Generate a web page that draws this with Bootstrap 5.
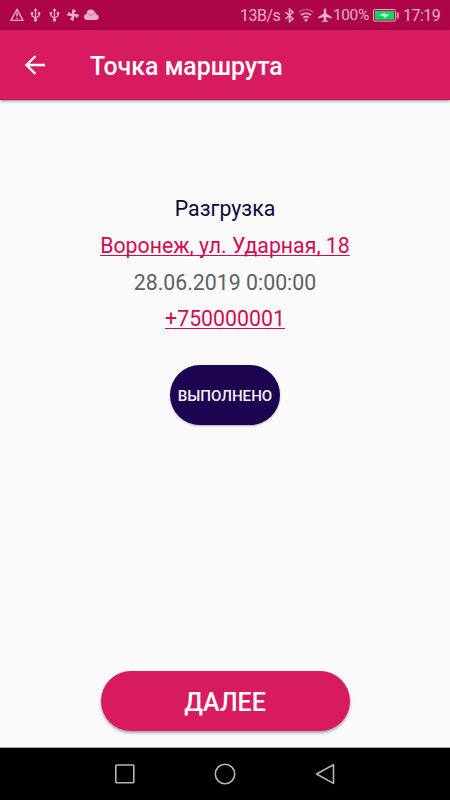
<!DOCTYPE html>
<html lang="ru">
<head>
<meta charset="utf-8">
<meta name="viewport" content="width=device-width, initial-scale=1">
<title>Точка маршрута</title>
<link href="https://cdn.jsdelivr.net/npm/bootstrap@5.3.0/dist/css/bootstrap.min.css" rel="stylesheet">
<style>
body{font-family:Roboto,sans-serif;background:#fafafa;height:800px;overflow:hidden}
svg{display:block;flex:none}
.status-strip{height:30px;background:#ad0547;color:#e9b1c7;font-size:16px;letter-spacing:-.5px;line-height:30px}
.status-strip span{white-space:nowrap;flex:none;padding-top:1px}
.status-strip .charge{width:40px;margin-left:1px;font-size:15.5px;letter-spacing:-.4px;padding-top:0}
.rate{width:44px}
.clock{width:47px;margin-left:4px}
.ms-3px{margin-left:3px}
.ms-6px{margin-left:6px}
.ms-8px{margin-left:8px}
.ms-10px{margin-left:10px}
.app-header{height:70px;background:#d81b60;box-shadow:0 1px 3px rgba(0,0,0,.45);border-bottom:1px solid #cb0d53}
.app-header h1{font-size:24.9px;line-height:30px;font-weight:500;margin-left:43px;padding-top:4px}
.back-link{width:24px;height:24px;margin-left:23px}
.route-info{font-size:21.3px;line-height:26px;color:#5f5f5f;padding-top:96px;gap:10.8px}
.route-kind{color:#0d0640}
.route-info a{color:#d40a51;text-decoration-thickness:1px;text-underline-offset:2px;text-decoration-skip-ink:none}
.done-btn,.next-btn{border:0;color:#fff;font-weight:500;white-space:nowrap}
.done-btn,.done-btn:hover{width:110px;height:60px;background:#1c0450;font-size:15.1px;color:#f4f2f6;margin-top:32.6px;box-shadow:0 1px 2px rgba(0,0,0,.3)}
.done-btn{padding:2px 0 0}
.next-btn,.next-btn:hover{width:249px;height:60px;background:#d81b60;color:#fff;font-size:25px;margin-bottom:16px;box-shadow:0 2px 3px rgba(0,0,0,.35)}
.system-nav{height:53px;background:#000;border-top:1px solid #aaa}
</style>
<script defer src="https://cdn.jsdelivr.net/npm/bootstrap@5.3.0/dist/js/bootstrap.bundle.min.js"></script>
</head>
<body class="d-flex flex-column m-0">
<svg width="0" height="0" class="position-absolute"><defs>
<g id="usb" fill="none" stroke="#e9b1c7" stroke-width="1.2"><path d="M5.500 2V12M2 5v3l3.500 2L9 8V5"/><path d="M5.500 0 3.500 3h4z" fill="#e9b1c7" stroke="none"/><path d="M.8 4h2.400v2.400H.8zM7.800 4h2.400v2.400H7.800z" fill="#e9b1c7" stroke="none"/><circle cx="5.500" cy="12" r="1.700" fill="#e9b1c7" stroke="none"/></g>
</defs></svg>
<div class="status-strip d-flex align-items-center flex-shrink-0">
<svg class="ms-10px" width="14" height="14" viewBox="0 0 14 14"><path d="M7 1.300 13 12.400H1z" fill="none" stroke="#e9b1c7" stroke-width="1.400" stroke-linejoin="round"/><path d="M7 4.500v4M7 9.700v1.400" stroke="#e9b1c7" stroke-width="1.400"/></svg>
<svg class="ms-6px" width="11" height="14"><use href="#usb"/></svg>
<svg class="ms-8px" width="11" height="14"><use href="#usb"/></svg>
<svg class="ms-6px" width="14" height="14" viewBox="0 0 13 13"><g fill="#e9b1c7" transform="rotate(12 6.500 6.500)"><path id="blade" d="M7.200 7.200 5 6.500V.8L8.700 2.200 7.300 4z"/><use href="#blade" transform="rotate(90 6.500 6.500)"/><use href="#blade" transform="rotate(180 6.500 6.500)"/><use href="#blade" transform="rotate(270 6.500 6.500)"/></g></svg>
<svg class="ms-3px" width="17" height="12" viewBox="0 0 17 12"><path d="M3.500 11a3.200 3.200 0 0 1 .2-6.300 4.300 4.300 0 0 1 8.300-1.500A2.500 2.500 0 0 1 13.500 5.500 2.800 2.800 0 0 1 13.500 11z" fill="#e9b1c7"/><path d="M4.500 5.200A3 3 0 0 1 8 7.200 3.500 3.500 0 0 1 12.500 5" fill="none" stroke="#c34e7d" stroke-width=".6"/></svg>
<div class="d-flex align-items-center ms-auto">
<span class="rate">13B/s</span>
<svg width="11" height="15" viewBox="0 0 11 15"><path d="M1.500 4 9 10.700 5.500 13.700V1.300L9 4.300 1.500 11" fill="none" stroke="#e9b1c7" stroke-width="1.500"/></svg>
<svg class="ms-3px" width="16" height="14" viewBox="0 0 16 14"><g fill="none" stroke="#e9b1c7" stroke-width="1.600"><path d="M.7 4.500a10.500 10.500 0 0 1 14.600 0" opacity=".4"/><path d="M3 7.200a7.200 7.200 0 0 1 10 0M5.300 9.800a4 4 0 0 1 5.400 0"/></g><circle cx="8" cy="12.200" r="1.400" fill="#e9b1c7"/></svg>
<svg class="ms-1" width="14" height="15" viewBox="0 0 14 15"><path d="M7 .5c.8 0 1.200.7 1.200 1.500v3.400L13.700 9v1.500L8.200 9v3l1.600 1.300v1L7 13.600l-2.800.7v-1L5.800 12V9L.3 10.500V9l5.500-3.600V2C5.800 1.200 6.200.5 7 .5z" fill="#e9b1c7"/></svg>
<span class="charge">100%</span>
<svg width="26" height="14" viewBox="0 0 26 14"><rect x=".6" y="1.600" width="21.800" height="11.500" rx="1" fill="#ad0547" stroke="#e9b1c7"/><rect x="2" y="3" width="19" height="8.700" fill="#10d957"/><path d="M6.500 7.500 12 4.500v2h4.500L11 10.200v-2z" fill="#d5ffe2"/><path d="M24.700 4.500v6" stroke="#e9b1c7" stroke-width="1.800"/></svg>
<span class="clock">17:19</span>
</div>
</div>
<header class="app-header d-flex align-items-center flex-shrink-0 text-white">
<a href="#" class="back-link text-white" aria-label="Назад"><svg width="24" height="24" viewBox="0 0 24 24"><path d="M22 12H3.500M12.500 3 3.500 12l9 9" fill="none" stroke="currentColor" stroke-width="2.400"/></svg></a>
<h1 class="mb-0">Точка маршрута</h1>
</header>
<main class="d-flex flex-column align-items-center flex-grow-1">
<div class="route-info d-flex flex-column align-items-center">
<div class="route-kind">Разгрузка</div>
<a href="#">Воронеж, ул. Ударная, 18</a>
<div>28.06.2019 0:00:00</div>
<a href="tel:+750000001">+750000001</a>
</div>
<button class="btn done-btn rounded-pill">ВЫПОЛНЕНО</button>
<button class="btn next-btn rounded-pill mt-auto p-0 pt-1">ДАЛЕЕ</button>
</main>
<nav class="system-nav d-flex justify-content-center align-items-center flex-shrink-0">
<svg width="240" height="24" viewBox="0 0 240 24" fill="none" stroke="#b5b5b5" stroke-width="1.600"><rect x="10.800" y="3" width="18" height="17.700" rx=".7"/><circle cx="120" cy="12" r="9.700"/><path d="M228.500 2.800v18.600L211.500 12z" stroke-linejoin="round"/></svg>
</nav>
</body>
</html>
